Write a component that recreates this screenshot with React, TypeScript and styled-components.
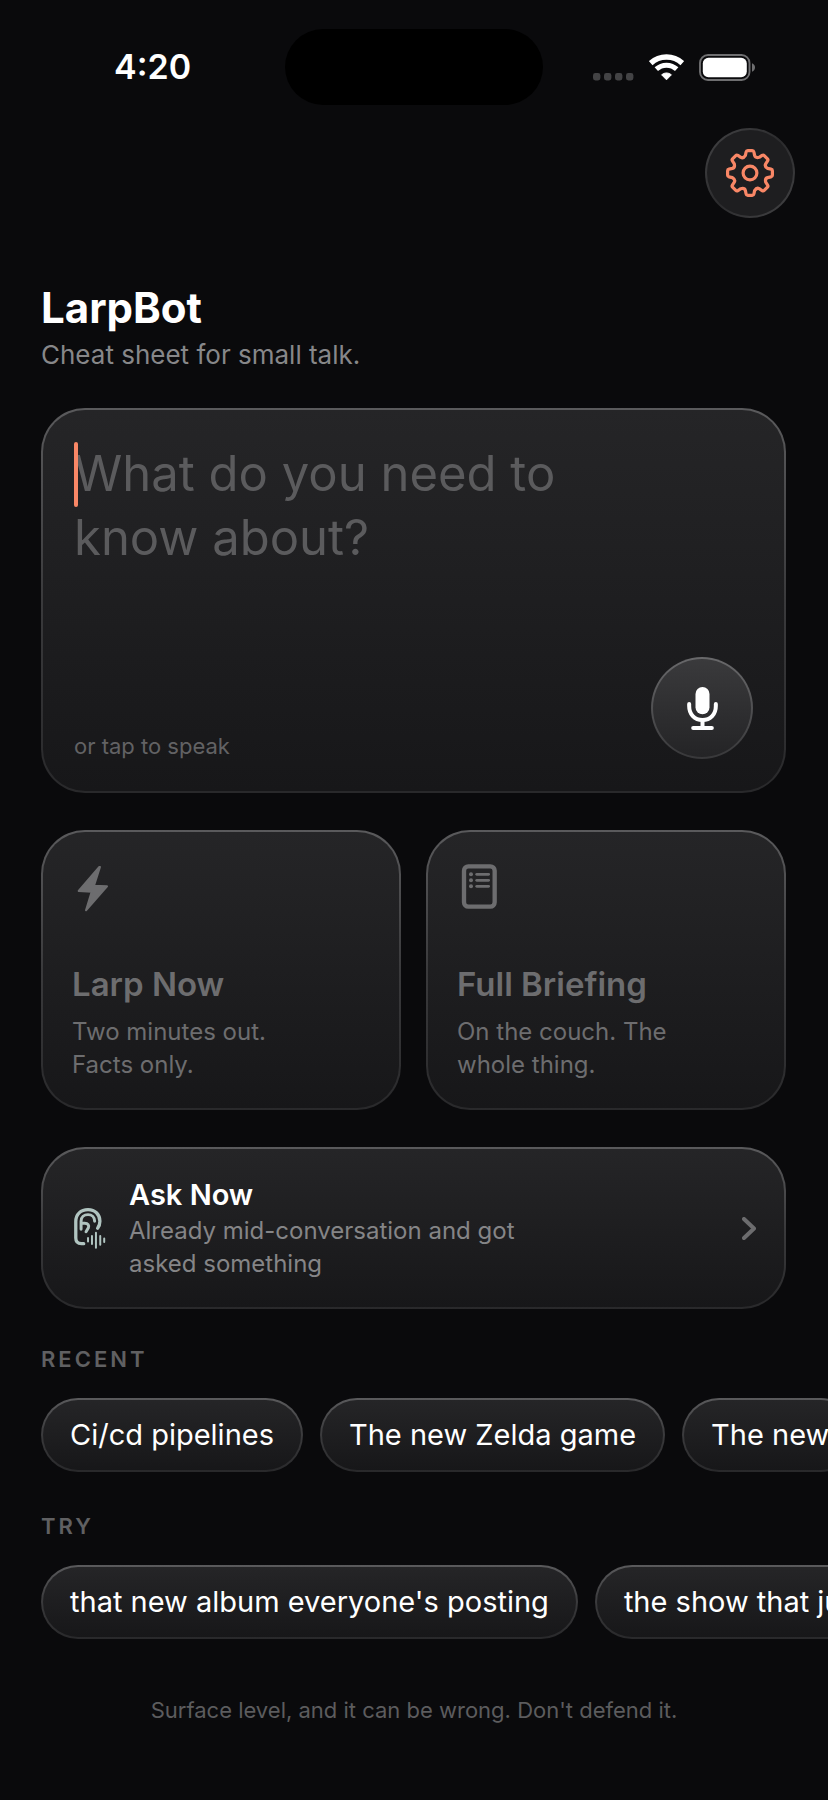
import React, { useState } from 'react';
import styled, { createGlobalStyle } from 'styled-components';

const GlobalStyle = createGlobalStyle`
  * { box-sizing: border-box; }
  body {
    margin: 0;
    background: #0a0a0c;
    color: #ffffff;
    font-family: Inter, "Liberation Sans", sans-serif;
  }
  button, textarea {
    font: inherit;
    color: inherit;
    margin: 0;
  }
`;

const Screen = styled.div`
  min-height: 100vh;
  overflow: hidden;
`;

const StatusBar = styled.div`
  display: grid;
  grid-template-columns: 1fr 258px 1fr;
  align-items: center;
  padding: 29px 72px 0;
`;

const Time = styled.time`
  padding-left: 42px;
  font-size: 34px;
  line-height: 40px;
  font-weight: 600;
`;

const Island = styled.div`
  height: 76px;
  border-radius: 38px;
  background: #000000;
`;

const StatusIcons = styled.div`
  display: flex;
  align-items: center;
  justify-content: flex-end;
  gap: 15px;
`;

const TopBar = styled.header`
  display: flex;
  justify-content: flex-end;
  padding: 23px 33px 0;
`;

const SettingsButton = styled.button`
  display: grid;
  place-items: center;
  width: 90px;
  height: 90px;
  padding: 0;
  border: 2px solid transparent;
  border-radius: 50%;
  background:
    linear-gradient(#1e1e20, #1e1e20) padding-box,
    linear-gradient(135deg, #444446, #2b2b2d 50%, #444446) border-box;
`;

const Main = styled.main`
  padding: 64px 42px 0 41px;
`;

const Title = styled.h1`
  margin: 0;
  font-size: 42px;
  line-height: 52px;
  font-weight: 700;
`;

const Tagline = styled.p`
  margin: 3px 0 0;
  font-size: 26px;
  line-height: 36px;
  color: #878789;
`;

const surface = `
  border: 2px solid transparent;
  background:
    linear-gradient(#252527, #171719) padding-box,
    linear-gradient(#5a5a5c, #3a3a3c 50%, #29292b) border-box;
`;

const PromptCard = styled.section`
  ${surface}
  margin-top: 35px;
  padding: 32px 31px;
  border-radius: 44px;
`;

const PromptField = styled.div`
  position: relative;
  height: 215px;
`;

const PromptInput = styled.textarea`
  display: block;
  width: 100%;
  height: 100%;
  padding: 0 100px 0 0;
  border: 0;
  outline: 0;
  resize: none;
  overflow: hidden;
  background: transparent;
  font-size: 49px;
  line-height: 64px;
  caret-color: #f98766;

  &::placeholder {
    color: #5b5b5d;
    opacity: 1;
  }
`;

const Caret = styled.span`
  position: absolute;
  top: 0;
  left: 0;
  width: 4px;
  height: 65px;
  border-radius: 2px;
  background: #f98766;
`;

const PromptFooter = styled.div`
  display: flex;
  align-items: flex-end;
  justify-content: space-between;
`;

const Hint = styled.span`
  font-size: 22px;
  line-height: 26px;
  color: #626264;
`;

const MicButton = styled.button`
  display: grid;
  place-items: center;
  width: 102px;
  height: 102px;
  padding: 0;
  border: 2px solid transparent;
  border-radius: 50%;
  background:
    linear-gradient(#3a3a3c, #242426) padding-box,
    linear-gradient(#69696b, #38383a) border-box;
`;

const ModeGrid = styled.div`
  display: grid;
  grid-template-columns: 1fr 1fr;
  gap: 25px;
  margin-top: 37px;
`;

const ModeCard = styled.button`
  ${surface}
  padding: 32px 29px 27px;
  border-radius: 44px;
  text-align: left;
  color: #6d6d6f;

  svg { display: block; }
`;

const ModeTitle = styled.span`
  display: block;
  margin-top: 51px;
  font-size: 33px;
  line-height: 42px;
  font-weight: 600;
`;

const Description = styled.span<{ $width: number }>`
  display: block;
  max-width: ${(p) => p.$width}px;
  font-size: 24px;
  line-height: 33px;
`;

const ModeDescription = styled(Description)`
  margin-top: 10px;
`;

const AskCard = styled.button`
  ${surface}
  display: flex;
  align-items: center;
  gap: 23px;
  width: 100%;
  margin-top: 37px;
  padding: 27px 28px 27px 31px;
  border-radius: 44px;
  text-align: left;
`;

const AskText = styled.span`
  flex: 1;
  color: #858587;
`;

const AskTitle = styled.span`
  display: block;
  font-size: 29px;
  line-height: 38px;
  font-weight: 600;
  color: #ffffff;
`;

const TopicSection = styled.section<{ $gap: number }>`
  margin-top: ${(p) => p.$gap}px;
`;

const SectionLabel = styled.h2`
  margin: 0;
  font-size: 22px;
  line-height: 28px;
  font-weight: 600;
  letter-spacing: 3px;
  color: #606062;
`;

const ChipRow = styled.div`
  display: flex;
  gap: 17px;
  margin: 25px -42px 0 -41px;
  padding: 0 42px 0 41px;
  overflow-x: auto;
  scrollbar-width: none;
`;

const Chip = styled.button`
  ${surface}
  flex: none;
  height: 74px;
  padding: 0 27px;
  border-radius: 37px;
  font-size: 29px;
  line-height: 38px;
  white-space: nowrap;
`;

const Disclaimer = styled.footer`
  padding: 57px 42px 76px;
  text-align: center;
  font-size: 22px;
  line-height: 28px;
  color: #5c5c5e;
`;

function SignalDots() {
  return (
    <svg width="41" height="27" viewBox="0 0 41 27" fill="#434345" aria-hidden="true">
      {[0, 11, 22, 33].map((x) => (
        <rect key={x} x={x} y="19" width="7.4" height="7.4" rx="2.4" />
      ))}
    </svg>
  );
}

function WifiIcon() {
  return (
    <svg width="35" height="27" viewBox="0 0 35 27" fill="none" stroke="#fff" aria-hidden="true">
      <path d="M1.7 9.2A23.3 23.3 0 0 1 33.3 9.2" strokeWidth="5.4" />
      <path d="M7.3 15.2A15 15 0 0 1 27.7 15.2" strokeWidth="5" />
      <path d="M12.6 20.8A7.4 7.4 0 0 1 22.4 20.8L17.5 25.8Z" fill="#fff" strokeWidth="1" strokeLinejoin="round" />
    </svg>
  );
}

function BatteryIcon() {
  return (
    <svg width="57" height="27" viewBox="0 0 57 27" aria-hidden="true">
      <rect x="1" y="1" width="49.5" height="25" rx="8" fill="none" stroke="#6f6f71" strokeWidth="1.9" />
      <rect x="3.8" y="3.8" width="44" height="19.4" rx="5.6" fill="#fff" />
      <path d="M53 9.3C55 10 56 11.6 56 13.5S55 17 53 17.7Z" fill="#6f6f71" />
    </svg>
  );
}

const gearPoint = (tooth: number, across: number, out: number) => {
  const a = (tooth * Math.PI) / 4;
  const x = 24 + across * Math.cos(a) + out * Math.sin(a);
  const y = 24 + across * Math.sin(a) - out * Math.cos(a);
  return `${x.toFixed(2)} ${y.toFixed(2)}`;
};

const gearPath =
  Array.from({ length: 8 }, (_, i) => {
    const p = (across: number, out: number) => gearPoint(i, across, out);
    return (
      `${i ? 'L' : 'M'}${p(-4.6, 17.6)}L${p(-3.9, 21)}Q${p(-3.6, 22.4)} ${p(-2.3, 22.4)}` +
      `L${p(2.3, 22.4)}Q${p(3.6, 22.4)} ${p(3.9, 21)}L${p(4.6, 17.6)}` +
      `Q${p(5.4, 14.8)} ${gearPoint(i + 1, -4.6, 17.6)}`
    );
  }).join('') + 'Z';

function GearIcon() {
  return (
    <svg width="48" height="48" viewBox="0 0 48 48" fill="none" stroke="#f98766" strokeWidth="3.2" strokeLinejoin="round" aria-hidden="true">
      <path d={gearPath} />
      <circle cx="24" cy="24" r="6.9" />
    </svg>
  );
}

function MicIcon() {
  return (
    <svg width="31" height="43" viewBox="0 0 92 129" fill="none" stroke="#fff" strokeWidth="12" strokeLinecap="round" aria-hidden="true">
      <rect x="25" y="0" width="42" height="82" rx="21" fill="#fff" stroke="none" />
      <path d="M6 51V57C6 82 22 99 46 99S86 82 86 57V51" />
      <path d="M46 100V120M18 123H74" />
    </svg>
  );
}

function BoltIcon() {
  return (
    <svg width="48" height="48" viewBox="0 0 144 144" fill="currentColor" stroke="currentColor" strokeWidth="6" strokeLinejoin="round" aria-hidden="true">
      <path d="M82 9L20 81L59 83L42 139L105 67L66 65L84 9Z" />
    </svg>
  );
}

function BriefingIcon() {
  return (
    <svg width="48" height="48" viewBox="0 0 144 144" fill="none" stroke="currentColor" strokeLinecap="round" aria-hidden="true">
      <rect x="21" y="7" width="92" height="121" rx="13" strokeWidth="13" />
      {[31, 49, 67].map((y) => (
        <g key={y}>
          <circle cx="42" cy={y} r="6" fill="currentColor" stroke="none" />
          <path d={`M59 ${y}H95`} strokeWidth="8" />
        </g>
      ))}
    </svg>
  );
}

function ListenIcon() {
  return (
    <svg width="32" height="41" viewBox="0 0 96 124" fill="none" stroke="#b0c4c0" strokeWidth="10" strokeLinecap="round" aria-hidden="true">
      <path d="M29 108H22C11 108 5 102 5 91V41C5 19 20 5 42 5C64 5 78 20 78 40C78 49 75 56 71 61" />
      <path d="M21 64V40C21 28 30 20 42 20C54 20 62 29 62 40" strokeWidth="9" />
      <path d="M22 46H32C42 46 46 53 43 60L36 72" strokeWidth="9" />
      <path d="M42 91V101M54 85V109M66 75V120M79 85V111M91 92V103" strokeWidth="6" />
    </svg>
  );
}

function ChevronIcon() {
  return (
    <svg width="14" height="23" viewBox="0 0 14 23" fill="none" stroke="#6c6c6e" strokeWidth="4" strokeLinecap="round" strokeLinejoin="round" aria-hidden="true">
      <path d="M2 2L12 11.5L2 21" />
    </svg>
  );
}

interface TopicsProps {
  label: string;
  topics: string[];
  gap: number;
  onPick: (topic: string) => void;
}

function Topics({ label, topics, gap, onPick }: TopicsProps) {
  return (
    <TopicSection $gap={gap} aria-label={label}>
      <SectionLabel>{label}</SectionLabel>
      <ChipRow>
        {topics.map((topic) => (
          <Chip key={topic} type="button" onClick={() => onPick(topic)}>
            {topic}
          </Chip>
        ))}
      </ChipRow>
    </TopicSection>
  );
}

export default function App() {
  const [prompt, setPrompt] = useState('');
  const [focused, setFocused] = useState(false);

  return (
    <Screen>
      <GlobalStyle />
      <StatusBar>
        <Time>4:20</Time>
        <Island />
        <StatusIcons>
          <SignalDots />
          <WifiIcon />
          <BatteryIcon />
        </StatusIcons>
      </StatusBar>
      <TopBar>
        <SettingsButton type="button" aria-label="Settings">
          <GearIcon />
        </SettingsButton>
      </TopBar>
      <Main>
        <Title>LarpBot</Title>
        <Tagline>Cheat sheet for small talk.</Tagline>

        <PromptCard>
          <PromptField>
            <PromptInput
              aria-label="Topic"
              placeholder="What do you need to know about?"
              value={prompt}
              onChange={(e) => setPrompt(e.target.value)}
              onFocus={() => setFocused(true)}
              onBlur={() => setFocused(false)}
            />
            {!focused && !prompt && <Caret />}
          </PromptField>
          <PromptFooter>
            <Hint>or tap to speak</Hint>
            <MicButton type="button" aria-label="Speak">
              <MicIcon />
            </MicButton>
          </PromptFooter>
        </PromptCard>

        <ModeGrid>
          <ModeCard type="button">
            <BoltIcon />
            <ModeTitle>Larp Now</ModeTitle>
            <ModeDescription $width={224}>Two minutes out. Facts only.</ModeDescription>
          </ModeCard>
          <ModeCard type="button">
            <BriefingIcon />
            <ModeTitle>Full Briefing</ModeTitle>
            <ModeDescription $width={224}>On the couch. The whole thing.</ModeDescription>
          </ModeCard>
        </ModeGrid>

        <AskCard type="button">
          <ListenIcon />
          <AskText>
            <AskTitle>Ask Now</AskTitle>
            <Description $width={420}>Already mid-conversation and got asked something</Description>
          </AskText>
          <ChevronIcon />
        </AskCard>

        <Topics
          label="RECENT"
          gap={36}
          topics={['Ci/cd pipelines', 'The new Zelda game', 'The new']}
          onPick={setPrompt}
        />
        <Topics
          label="TRY"
          gap={40}
          topics={["that new album everyone's posting", 'the show that just']}
          onPick={setPrompt}
        />
      </Main>
      <Disclaimer>Surface level, and it can be wrong. Don't defend it.</Disclaimer>
    </Screen>
  );
}
